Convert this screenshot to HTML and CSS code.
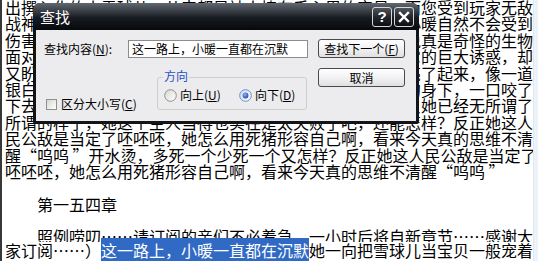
FILE: index.html
```html
<!DOCTYPE html>
<html lang="zh-CN">
<head>
<meta charset="utf-8">
<title>查找</title>
<link rel="stylesheet" href="styles.css">
</head>
<body>
<div class="window">
  <div class="doc">
    <div class="lines">
      <div class="line">出撰入化的小雪球儿，从来都是被人捧在手心里的宝贝，而您受到玩家无敌</div>
      <div class="line">战神般的存在，连主人都很少见到它发脾气的样子，所以小暖自然不会受到</div>
      <div class="line">伤害的力量对它来说根本算不了什么，这只小雪球儿可以说真是奇怪的生物</div>
      <div class="line">面对着眼前这个诱人的食物，小雪球儿最终还是抵挡不住它的巨大诱惑，却</div>
      <div class="line">又盼望着那一块香喷喷的肉，小雪球儿的眼睛一下子全都亮了起来，像一道</div>
      <div class="line">银白色的闪电一样冲了出去，直接就扑到了那一只小动物的身下，一口咬了</div>
      <div class="line">下去去。小暖看着这一幕，心里已经不知道该说什么了，反她已经无所谓了</div>
      <div class="line">所谓的样子，她这个主人当得也实在是太失败了吧，还能怎样？反正她这人</div>
      <div class="line">民公敌是当定了呸呸呸，她怎么用死猪形容自己啊，看来今天真的思维不清</div>
      <div class="line">醒“呜呜 ”开水烫，多死一个少死一个又怎样？反正她这人民公敌是当定了</div>
      <div class="line">呸呸呸，她怎么用死猪形容自己啊，看来今天真的思维不清醒“呜呜 ”</div>
      <div class="line"></div>
      <div class="line">　　第一五四章</div>
      <div class="line"></div>
      <div class="line cut">　　照例唠叨……请订阅的亲们不必着急，一小时后将自新章节……感谢大</div>
      <div class="line">家订阅……）<span class="sel">这一路上，小暖一直都在沉默</span>她一向把雪球儿当宝贝一般宠着</div>
    </div>
  </div>
  <div class="scroll"></div>
</div>

<div class="dialog">
  <div class="titlebar">
    <span class="title">查找</span>
    <div class="tbtns">
      <div class="tbtn">?</div>
      <div class="tbtn">
        <svg width="12" height="12" viewBox="0 0 12 12"><path d="M2 2 L10 10 M10 2 L2 10" stroke="#fff" stroke-width="2.4" stroke-linecap="square"/></svg>
      </div>
    </div>
  </div>
  <div class="body">
    <div class="main">
      <div class="row1">
        <span class="lbl">查找内容(<u>N</u>):</span>
        <div class="input">这一路上，小暖一直都在沉默</div>
      </div>
      <div class="row2">
        <div class="check">
          <span class="box"></span>
          <span>区分大小写(<u>C</u>)</span>
        </div>
        <div class="group">
          <span class="legend">方向</span>
          <div class="radio">
            <svg width="13" height="13" viewBox="0 0 13 13"><defs><linearGradient id="ru" x1="0" y1="0" x2="1" y2="1"><stop offset="0" stop-color="#d8d8d2"/><stop offset="1" stop-color="#ffffff"/></linearGradient></defs><circle cx="6.5" cy="6.5" r="5.8" fill="url(#ru)" stroke="#8e8f8f"/></svg>
            <span>向上(<u>U</u>)</span>
          </div>
          <div class="radio">
            <svg width="13" height="13" viewBox="0 0 13 13"><defs><linearGradient id="rs" x1="0" y1="0" x2="1" y2="1"><stop offset="0" stop-color="#c9d9f3"/><stop offset="1" stop-color="#ffffff"/></linearGradient><radialGradient id="rd" cx="0.4" cy="0.35" r="0.7"><stop offset="0" stop-color="#8fb4f0"/><stop offset="1" stop-color="#1a44b0"/></radialGradient></defs><circle cx="6.5" cy="6.5" r="5.8" fill="url(#rs)" stroke="#6b8fc8"/><circle cx="6.5" cy="6.5" r="2.9" fill="url(#rd)"/></svg>
            <span>向下(<u>D</u>)</span>
          </div>
        </div>
      </div>
    </div>
    <div class="buttons">
      <div class="btn">查找下一个(<u>F</u>)</div>
      <div class="btn">取消</div>
    </div>
  </div>
</div>
</body>
</html>
```

FILE: styles.css
```css
html, body {
  margin: 0;
  padding: 0;
}
body {
  width: 538px;
  height: 261px;
  overflow: hidden;
  background: #fff;
  position: relative;
  font-family: "Noto Sans CJK SC", sans-serif;
}
.window {
  display: flex;
  height: 261px;
}
.doc {
  flex: 1;
  border-left: 2px solid #383838;
  padding-left: 3px;
  overflow: hidden;
  font-size: 16px;
  color: #000;
}
.lines {
  margin-top: -1px;
}
.line {
  height: 16.4px;
  line-height: 16.4px;
  white-space: pre;
}
.line.cut {
  height: 14px;
  overflow: hidden;
}
.sel {
  background: #316ac5;
  color: #fff;
}
.scroll {
  width: 4px;
  background: #eef3fa;
  border-left: 1px solid #dfe7f3;
}

/* dialog */
.dialog {
  position: absolute;
  left: 33px;
  top: 3px;
  width: 386px;
  height: 121px;
  box-sizing: border-box;
  padding: 0 3px 3px;
  background: #121418;
  border-radius: 7px 7px 2px 2px;
  display: flex;
  flex-direction: column;
  font-size: 12px;
  color: #000;
}
.titlebar {
  height: 27px;
  margin: 0 -3px;
  padding: 0 5px 0 7px;
  display: flex;
  align-items: center;
  border-radius: 7px 7px 0 0;
  background: linear-gradient(#626870 0%, #3c4149 28%, #171b21 55%, #07090c 100%);
}
.title {
  color: #fff;
  font-size: 15px;
  line-height: 18px;
}
.tbtns {
  margin-left: auto;
  display: flex;
  gap: 2px;
}
.tbtn {
  width: 20px;
  height: 20px;
  box-sizing: border-box;
  border: 1px solid #d4d7db;
  border-radius: 3px;
  background: linear-gradient(#50555c, #23272d 50%, #0c0e12);
  color: #fff;
  font-family: "Liberation Sans", sans-serif;
  font-weight: bold;
  font-size: 15px;
  line-height: 18px;
  display: flex;
  align-items: center;
  justify-content: center;
}
.body {
  flex: 1;
  background: #ececee;
  display: flex;
  padding: 9px 11px 0 8px;
}
.main {
  width: 264px;
  display: flex;
  flex-direction: column;
}
.row1 {
  margin-top: 1px;
  height: 18px;
  display: flex;
  align-items: center;
}
.lbl {
  width: 84px;
  line-height: 14px;
}
.input {
  width: 180px;
  height: 18px;
  box-sizing: border-box;
  border: 1px solid #8a8c8e;
  background: #fff;
  padding-left: 3px;
  line-height: 16px;
  white-space: nowrap;
}
.row2 {
  margin-top: 19px;
  display: flex;
}
.check {
  width: 113px;
  margin-top: 20px;
  padding-left: 2px;
  box-sizing: border-box;
  display: flex;
  align-items: center;
  gap: 4px;
  height: 14px;
  line-height: 14px;
}
.box {
  width: 11px;
  height: 11px;
  box-sizing: border-box;
  border: 1px solid #8e8f8f;
  background: linear-gradient(135deg, #d6d6d0, #ffffff);
}
.group {
  position: relative;
  width: 150px;
  height: 33px;
  box-sizing: border-box;
  border: 1px solid #d0d0c8;
  border-radius: 3px;
  padding: 10px 0 0 6px;
  display: grid;
  grid-template-columns: 75px auto;
  align-items: start;
}
.legend {
  position: absolute;
  top: -9px;
  left: 5px;
  padding: 0 1px;
  background: #ececee;
  color: #1e4fc8;
  line-height: 14px;
}
.radio {
  display: flex;
  align-items: center;
  gap: 3px;
  line-height: 14px;
}
.radio svg {
  display: block;
}
.buttons {
  margin-left: 10px;
  display: flex;
  flex-direction: column;
  gap: 10px;
}
.btn {
  width: 87px;
  height: 19px;
  box-sizing: border-box;
  border: 1px solid #474a4e;
  border-radius: 3px;
  background: linear-gradient(#ffffff, #f2f2f2 50%, #e0e0e0);
  display: flex;
  align-items: center;
  justify-content: center;
  line-height: 14px;
  white-space: nowrap;
}
```
